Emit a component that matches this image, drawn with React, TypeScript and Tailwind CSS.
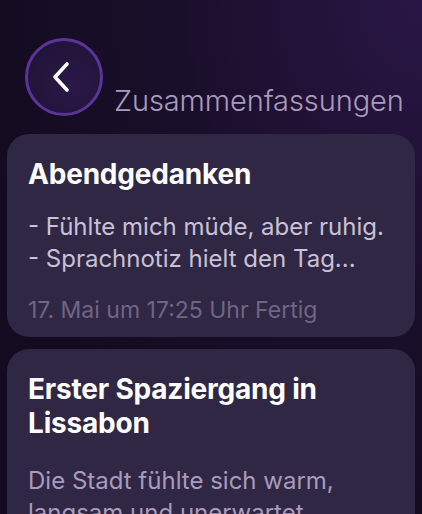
import React from "react";

function BackButton() {
  return (
    <div className="flex h-[78px] w-[78px] shrink-0 items-center justify-center rounded-full border-[3px] border-[#5a3597] bg-[radial-gradient(circle_at_60%_60%,#2a1848_0%,#1e1233_100%)]">
      <svg width="20" height="32" viewBox="0 0 20 32" fill="none" className="ml-[-4px]">
        <path d="M15 3 L3 16 L15 29" stroke="#ffffff" strokeWidth="3.6" strokeLinecap="round" strokeLinejoin="round" />
      </svg>
    </div>
  );
}

export default function App() {
  return (
    <div
      className="h-[514px] w-[422px] overflow-hidden bg-[radial-gradient(ellipse_at_100%_0%,#2a1646_0%,#1a0f2b_40%,#140b20_75%)] px-[7px]"
      style={{ fontFamily: "Inter, 'Noto Sans', sans-serif" }}
    >
      <div className="flex items-end gap-[11px] pl-[18px] pt-[38px]">
        <BackButton />
        <div className="text-[29px] font-light leading-[30px] tracking-[-0.1px] text-[#a99bbd]">
          Zusammenfassungen
        </div>
      </div>

      <div className="mt-[18px] flex flex-col gap-[12px]">
        <div className="rounded-[22px] bg-[#2f2743] px-[21px] pb-[13px] pt-[23px]">
          <div className="text-[28px] font-bold leading-[34px] tracking-[-0.2px] text-white">Abendgedanken</div>
          <div className="mt-[20px] text-[24px] leading-[32px] text-[#c9c1d6]">
            <div>- Fühlte mich müde, aber ruhig.</div>
            <div>- Sprachnotiz hielt den Tag...</div>
          </div>
          <div className="mt-[21px] text-[23px] leading-[28px] text-[#6f6584]">17. Mai um 17:25 Uhr Fertig</div>
        </div>

        <div className="rounded-[22px] bg-[#2f2743] px-[21px] pb-[20px] pt-[23px]">
          <div className="text-[28px] font-bold leading-[34px] tracking-[-0.2px] text-white">
            Erster Spaziergang in
            <br />
            Lissabon
          </div>
          <div className="mt-[25px] text-[24px] leading-[32px] text-[#a99bbd]">
            Die Stadt fühlte sich warm,
            <br />
            langsam und unerwartet.
          </div>
        </div>
      </div>
    </div>
  );
}
